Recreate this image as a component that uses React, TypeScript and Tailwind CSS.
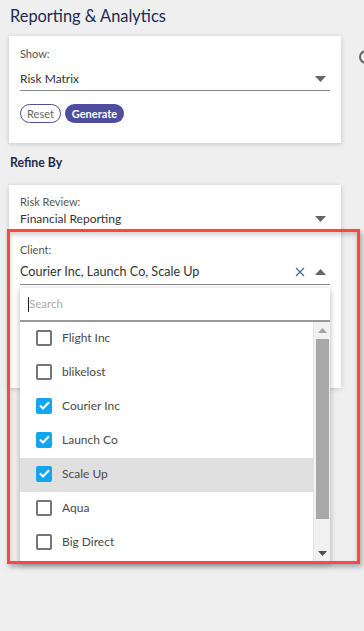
import React from 'react';

const clients = [
  { name: 'Flight Inc', checked: false },
  { name: 'blikelost', checked: false },
  { name: 'Courier Inc', checked: true },
  { name: 'Launch Co', checked: true },
  { name: 'Scale Up', checked: true, hover: true },
  { name: 'Aqua', checked: false },
  { name: 'Big Direct', checked: false },
];

const Caret = ({ up = false }: { up?: boolean }) => (
  <svg width="11" height="6" viewBox="0 0 11 6" className="shrink-0">
    <path d={up ? 'M0 6 L5.5 0 L11 6 Z' : 'M0 0 L5.5 6 L11 0 Z'} fill="#666" />
  </svg>
);

const Checkbox = ({ checked }: { checked: boolean }) =>
  checked ? (
    <span className="w-4 h-4 rounded-[2px] bg-[#14a6ec] flex items-center justify-center shrink-0">
      <svg width="11" height="9" viewBox="0 0 11 9">
        <path d="M1 4.5 L4 7.5 L10 1.2" fill="none" stroke="#fff" strokeWidth="2" />
      </svg>
    </span>
  ) : (
    <span className="w-4 h-4 rounded-[2px] border-2 border-[#757575] shrink-0" />
  );

const App: React.FC = () => {
  return (
    <div className="relative min-h-screen bg-[#efefef] overflow-hidden font-['Lato','Noto_Sans',sans-serif] text-[#333]">
      <div className="px-[9px] w-[350px]">
        <h1 className="pt-1 pl-px h-7 text-[16.4px] leading-6 text-[#232a4d]">Reporting &amp; Analytics</h1>

        {/* Show card */}
        <div className="mt-2 w-[332px] bg-white shadow-[0_1px_5px_rgba(0,0,0,0.18)] px-[11px] pt-[10px] pb-5">
          <p className="text-[11px] leading-4 text-[#555]">Show:</p>
          <div className="mt-[6px] h-[23px] flex items-center justify-between border-b border-[#888] pr-1">
            <span className="text-[12px] leading-5">Risk Matrix</span>
            <Caret />
          </div>
          <div className="mt-[13px] flex gap-1">
            <button className="h-[19px] w-[41px] rounded-full border border-[#4f4d9e] text-[11px] text-[#666] leading-none">Reset</button>
            <button className="h-[19px] w-[59px] rounded-full bg-[#4f4d9e] text-[11px] font-bold text-white leading-none">Generate</button>
          </div>
        </div>

        <h2 className="mt-[10px] pl-px h-5 text-[12.3px] leading-5 font-bold text-[#232a4d]">Refine By</h2>

        {/* Refine card */}
        <div className="mt-3 w-[332px] bg-white shadow-[0_1px_5px_rgba(0,0,0,0.18)] px-[11px] pt-[9px]">
          <p className="text-[11px] leading-4 text-[#555]">Risk Review:</p>
          <div className="h-[18px] flex items-center justify-between pr-1">
            <span className="text-[12px] leading-[18px]">Financial Reporting</span>
            <Caret />
          </div>
          <p className="mt-[14px] text-[11px] leading-4 text-[#555]">Client:</p>
          <div className="mt-[3px] h-[24px] flex items-center justify-between border-b border-[#888] pr-1">
            <span className="text-[12.6px] leading-5 pb-[2px]">Courier Inc, Launch Co, Scale Up</span>
            <div className="flex items-center gap-[10px] pb-[2px]">
              <svg width="10" height="10" viewBox="0 0 10 10">
                <path d="M1 1 L9 9 M9 1 L1 9" stroke="#4a6b98" strokeWidth="1.3" />
              </svg>
              <Caret up />
            </div>
          </div>
          <div className="h-[103px]" />
        </div>
      </div>

      {/* cut-off icon on the right edge */}
      <div className="absolute left-[359px] top-[50px] w-[14px] h-[14px] rounded-full border-2 border-[#666]" />

      {/* Client dropdown popup */}
      <div className="absolute left-[20px] top-[288px] w-[310px] h-[274px] bg-white shadow-[0_2px_6px_rgba(0,0,0,0.3)] flex flex-col">
        <div className="h-[34px] shrink-0 border-b-2 border-[#999] flex items-center pl-2">
          <span className="w-px h-[15px] bg-[#222]" />
          <span className="text-[11.5px] text-[#aaa]">Search</span>
        </div>
        <div className="flex flex-1 min-h-0">
          <ul className="flex-1 overflow-hidden">
            {clients.map((c) => (
              <li
                key={c.name}
                className={`h-[34px] flex items-center gap-[10px] pl-4 pb-[3px] ${c.hover ? 'bg-[#e0e0e0]' : ''}`}
              >
                <Checkbox checked={c.checked} />
                <span className="text-[12px] text-[#4a4a4a]">{c.name}</span>
              </li>
            ))}
          </ul>
          <div className="w-[17px] bg-[#f1f1f1] border-l border-[#e4e4e4] flex flex-col items-center">
            <div className="h-[17px] flex items-center justify-center">
              <svg width="9" height="5" viewBox="0 0 9 5"><path d="M0 5 L4.5 0 L9 5 Z" fill="#a3a3a3" /></svg>
            </div>
            <div className="w-[13px] h-[180px] bg-[#a8a8a8]" />
            <div className="flex-1" />
            <div className="h-[17px] flex items-center justify-center">
              <svg width="9" height="5" viewBox="0 0 9 5"><path d="M0 0 L4.5 5 L9 0 Z" fill="#505050" /></svg>
            </div>
          </div>
        </div>
      </div>

      {/* red highlight annotation */}
      <div className="absolute left-[7px] top-[229px] w-[353px] h-[335px] border-[3px] border-[#ff4545] shadow-[2px_3px_5px_rgba(0,0,0,0.3),inset_0_3px_5px_rgba(0,0,0,0.18)] pointer-events-none" />
    </div>
  );
};

export default App;
